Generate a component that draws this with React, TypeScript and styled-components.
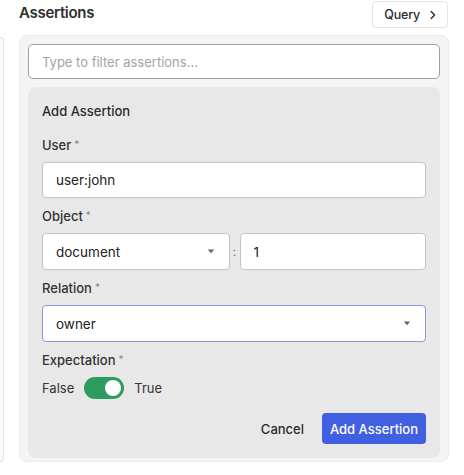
import { useState } from 'react'
import styled, { createGlobalStyle } from 'styled-components'

const GlobalStyle = createGlobalStyle`
  html, body {
    margin: 0;
    padding: 0;
    background: #ffffff;
  }
  body {
    font-family: Inter, "Noto Sans", "Liberation Sans", sans-serif;
    color: #2b2b2b;
  }
  * { box-sizing: border-box; }
`

const Caret = () => (
  <svg width="8" height="5" viewBox="0 0 8 5">
    <path d="M0.8 0.5 L7.2 0.5 L4 4.3 Z" fill="#666" />
  </svg>
)

const Chevron = () => (
  <svg width="8" height="10" viewBox="0 0 8 10">
    <path d="M2.2 1.5 L5.6 5 L2.2 8.5" fill="none" stroke="#333" strokeWidth="1.5" strokeLinecap="round" strokeLinejoin="round" />
  </svg>
)

function App() {
  const [expected, setExpected] = useState(true)

  return (
    <Page>
      <GlobalStyle />
      <Sliver />
      <Main>
        <Header>
          <Title>Assertions</Title>
          <QueryButton>
            Query
            <Chevron />
          </QueryButton>
        </Header>
        <Panel>
          <FilterInput placeholder="Type to filter assertions..." />
          <Card>
            <CardTitle>Add Assertion</CardTitle>

            <Label>User<Req>*</Req></Label>
            <Field defaultValue="user:john" />

            <Label>Object<Req>*</Req></Label>
            <ObjectRow>
              <Select $inline>
                <span>document</span>
                <Caret />
              </Select>
              <Colon>:</Colon>
              <Field $inline defaultValue="1" />
            </ObjectRow>

            <Label>Relation<Req>*</Req></Label>
            <Select $focused>
              <span>owner</span>
              <Caret />
            </Select>

            <Label>Expectation<Req>*</Req></Label>
            <ToggleRow>
              <span>False</span>
              <Toggle $on={expected} onClick={() => setExpected(!expected)}>
                <Knob />
              </Toggle>
              <span>True</span>
            </ToggleRow>

            <Actions>
              <GhostButton>Cancel</GhostButton>
              <PrimaryButton>Add Assertion</PrimaryButton>
            </Actions>
          </Card>
        </Panel>
      </Main>
    </Page>
  )
}

export default App

const Page = styled.div`
  display: flex;
  width: 464px;
  height: 475px;
  overflow: hidden;
`

const Sliver = styled.div`
  width: 4px;
  height: 425px;
  margin-top: 37px;
  border: 1px solid #e4e4e4;
  border-left: none;
  border-radius: 0 6px 6px 0;
  background: #fafafa;
`

const Main = styled.div`
  width: 430px;
  margin-left: 15px;
  display: flex;
  flex-direction: column;
`

const Header = styled.div`
  display: flex;
  justify-content: space-between;
  align-items: flex-start;
  height: 28px;
`

const Title = styled.h2`
  margin: 0;
  font-size: 15px;
  font-weight: 600;
  letter-spacing: -0.3px;
  color: #2e2e2e;
  line-height: 26px;
`

const QueryButton = styled.button`
  display: flex;
  align-items: center;
  gap: 9px;
  height: 27px;
  margin-top: 1px;
  margin-right: 1px;
  padding: 0 10px 0 11px;
  background: #fff;
  border: 1px solid #e3e3e3;
  border-radius: 4px;
  font-family: inherit;
  font-size: 12.5px;
  font-weight: 500;
  letter-spacing: -0.2px;
  color: #2b2b2b;
`

const Panel = styled.div`
  margin-top: 7px;
  padding: 8px 8px 3px;
  background: #f4f4f4;
  border: 1px solid #ebebeb;
  border-radius: 8px;
  display: flex;
  flex-direction: column;
  gap: 8px;
`

const FilterInput = styled.input`
  height: 35px;
  width: 100%;
  padding: 0 13px;
  border: 1px solid #9e9e9e;
  border-radius: 5px;
  background: #fff;
  font-family: inherit;
  font-size: 13px;
  color: #2b2b2b;
  outline: none;

  &::placeholder {
    color: #a3a3a3;
  }
`

const Card = styled.div`
  background: #e8e8e8;
  border-radius: 8px;
  padding: 14px;
  display: flex;
  flex-direction: column;
`

const CardTitle = styled.div`
  font-size: 13px;
  font-weight: 500;
  line-height: 20px;
  color: #2b2b2b;
  margin-bottom: 6px;
`

const Label = styled.div`
  font-size: 13px;
  font-weight: 500;
  line-height: 20px;
  height: 20px;
  color: #333;
  margin: 8px 0 7px;
`

const Req = styled.span`
  font-size: 10px;
  font-weight: 400;
  color: #8a8a8a;
  margin-left: 3px;
  position: relative;
  top: -2px;
`

const Field = styled.input<{ $inline?: boolean }>`
  height: ${p => (p.$inline ? '37px' : '36px')};
  width: 100%;
  min-width: 0;
  flex: ${p => (p.$inline ? '1 1 0' : 'none')};
  padding: 0 13px;
  border: 1px solid #c4c4c4;
  border-radius: 4px;
  background: #fff;
  font-family: inherit;
  font-size: 13.5px;
  color: #222;
  outline: none;
`

const ObjectRow = styled.div`
  display: flex;
  align-items: center;
  height: 37px;
`

const Select = styled.div<{ $focused?: boolean; $inline?: boolean }>`
  display: flex;
  align-items: center;
  justify-content: space-between;
  height: 37px;
  width: 100%;
  min-width: 0;
  flex: ${p => (p.$inline ? '1 1 0' : 'none')};
  padding: 0 14px 0 13px;
  background: #fff;
  border: 1px solid ${p => (p.$focused ? '#8e98dd' : '#c4c4c4')};
  border-radius: 4px;
  font-size: 13.5px;
  color: #222;
`

const Colon = styled.span`
  width: 10px;
  text-align: center;
  font-size: 12px;
  color: #777;
  flex: none;
`

const ToggleRow = styled.div`
  display: flex;
  align-items: center;
  gap: 10px;
  height: 22px;
  font-size: 13px;
  color: #333;
`

const Toggle = styled.div<{ $on: boolean }>`
  width: 40px;
  height: 22px;
  border-radius: 11px;
  background: ${p => (p.$on ? '#2d9d5f' : '#bdbdbd')};
  display: flex;
  align-items: center;
  padding: 0 3px;
  justify-content: ${p => (p.$on ? 'flex-end' : 'flex-start')};
  cursor: pointer;
`

const Knob = styled.div`
  width: 16px;
  height: 16px;
  border-radius: 50%;
  background: #fff;
`

const Actions = styled.div`
  display: flex;
  justify-content: flex-end;
  align-items: center;
  gap: 8px;
  margin-top: 14px;
`

const GhostButton = styled.button`
  height: 31px;
  padding: 0 10px;
  background: transparent;
  border: none;
  font-family: inherit;
  font-size: 13px;
  font-weight: 500;
  color: #2b2b2b;
`

const PrimaryButton = styled.button`
  height: 31px;
  width: 104px;
  padding: 0;
  background: #405fe1;
  border: none;
  border-radius: 4px;
  font-family: inherit;
  font-size: 13px;
  font-weight: 500;
  color: #fff;
`
